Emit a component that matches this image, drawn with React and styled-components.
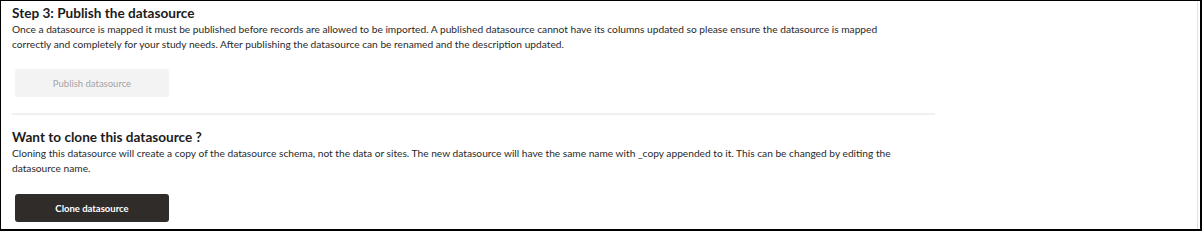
import React from "react";
import styled, { createGlobalStyle } from "styled-components";

const GlobalStyle = createGlobalStyle`
  html, body {
    margin: 0;
    padding: 0;
    background: #ffffff;
  }
  body {
    font-family: Lato, "Noto Sans", sans-serif;
    color: #2b2b2b;
  }
`;

const Frame = styled.div`
  box-sizing: border-box;
  width: 1202px;
  height: 231px;
  border-style: solid;
  border-color: #000;
  border-width: 1px 2px 2px 1px;
  box-shadow: inset -2px 0 0 #fff, inset -3px 0 0 #e2e2e2;
  overflow: hidden;
`;

const Content = styled.div`
  width: 923px;
  padding: 3px 0 0 11px;
`;

const Section = styled.section`
  display: flex;
  flex-direction: column;
  align-items: flex-start;
  padding: ${(p) => p.$pad || "0"};
  border-bottom: ${(p) => (p.$divider ? "2px solid #f0f0f0" : "none")};
`;

const Heading = styled.h3`
  margin: 0;
  font-size: 13.6px;
  line-height: 18px;
  font-weight: 700;
  color: #1c1c1c;
`;

const Text = styled.p`
  max-width: 900px;
  margin: 0;
  font-size: 10.2px;
  line-height: 15px;
  color: #2a2a2a;
`;

const Button = styled.button`
  box-sizing: border-box;
  width: 154px;
  height: 28px;
  margin: ${(p) => p.$margin || "0"};
  margin-left: 3px;
  border: none;
  border-radius: 3px;
  font-family: Lato, "Noto Sans", sans-serif;
  font-size: 9.5px;
  font-weight: ${(p) => (p.$primary ? 700 : 400)};
  background: ${(p) => (p.$primary ? "#302c29" : "#f3f3f3")};
  color: ${(p) => (p.$primary ? "#ffffff" : "#a3a3a3")};
  cursor: ${(p) => (p.disabled ? "default" : "pointer")};
`;

export default function App() {
  return (
    <>
      <GlobalStyle />
      <Frame>
        <Content>
          <Section $divider $pad="0 0 16px 0">
            <Heading>Step 3: Publish the datasource</Heading>
            <Text>
              Once a datasource is mapped it must be published before records are allowed to be
              imported. A published datasource cannot have its columns updated so please ensure
              the datasource is mapped correctly and completely for your study needs. After
              publishing the datasource can be renamed and the description updated.
            </Text>
            <Button disabled $margin="17px 0 0 0">
              Publish datasource
            </Button>
          </Section>
          <Section $pad="13px 0 0 0">
            <Heading>Want to clone this datasource ?</Heading>
            <Text>
              Cloning this datasource will create a copy of the datasource schema, not the data or
              sites. The new datasource will have the same name with _copy appended to it. This can
              be changed by editing the datasource name.
            </Text>
            <Button $primary $margin="18px 0 0 0">
              Clone datasource
            </Button>
          </Section>
        </Content>
      </Frame>
    </>
  );
}
